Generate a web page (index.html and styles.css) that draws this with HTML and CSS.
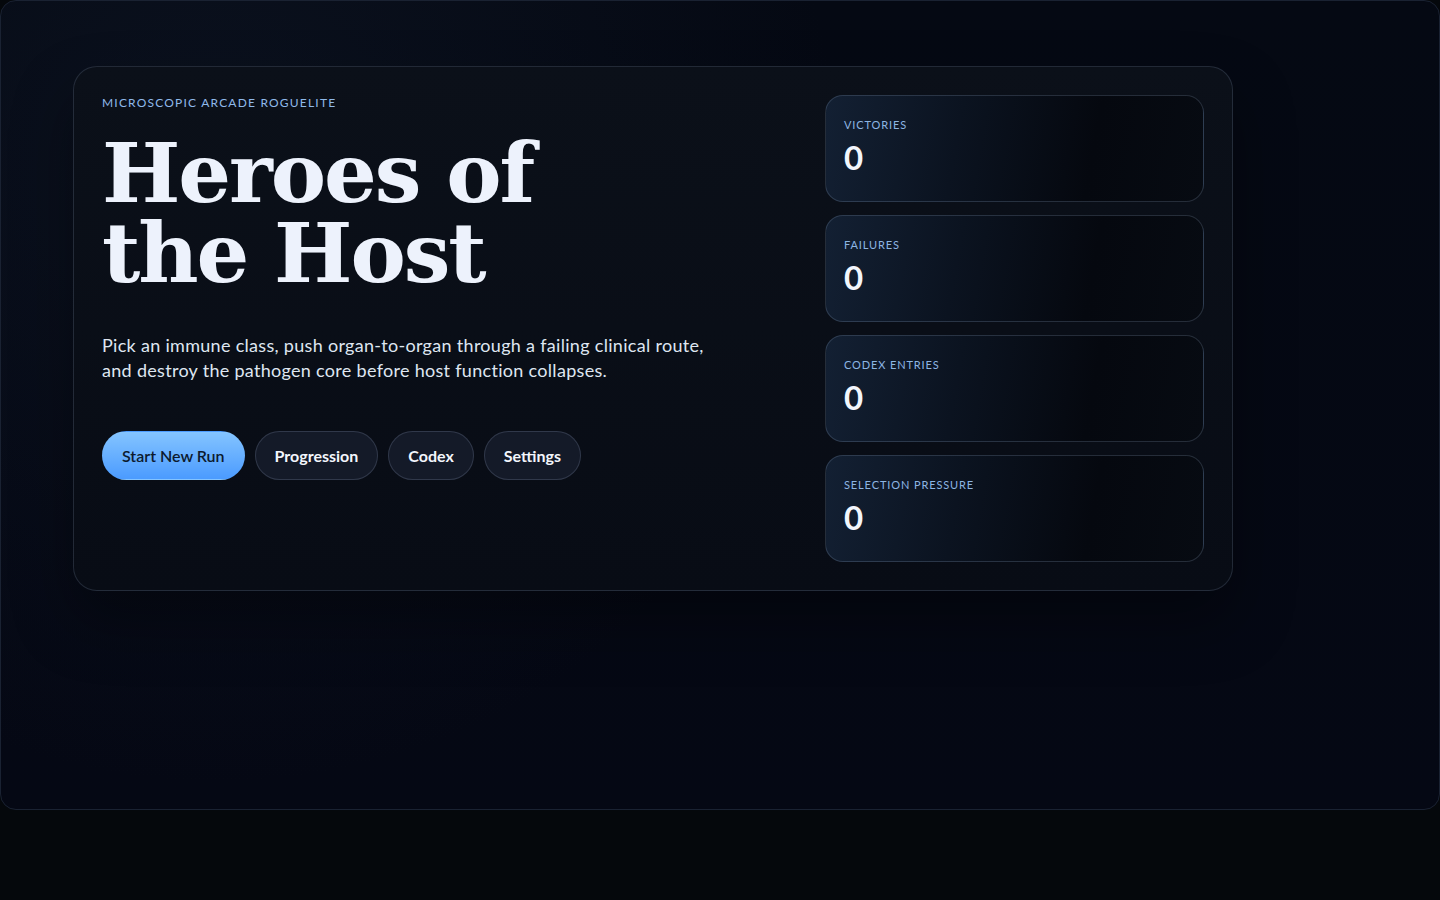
FILE: index.html
```html
<!DOCTYPE html>
<html lang="en">
<head>
    <meta charset="UTF-8">
    <meta name="viewport" content="width=device-width, initial-scale=1.0">
    <title>Heroes of the Host</title>
    <link rel="stylesheet" href="styles.css">
</head>
<body>
    <div class="shell">
        <section class="hero">
            <div class="hero-copy">
                <p class="eyebrow">Microscopic Arcade Roguelite</p>
                <h1>Heroes of the Host</h1>
                <p class="lede">Pick an immune class, push organ-to-organ through a failing clinical route, and destroy the pathogen core before host function collapses.</p>
                <div class="actions">
                    <button class="btn primary">Start New Run</button>
                    <button class="btn">Progression</button>
                    <button class="btn">Codex</button>
                    <button class="btn">Settings</button>
                </div>
            </div>

            <!-- run stats -->
            <div class="stats">
                <div class="stat">
                    <span class="stat-label">Victories</span>
                    <span class="stat-value">0</span>
                </div>
                <div class="stat">
                    <span class="stat-label">Failures</span>
                    <span class="stat-value">0</span>
                </div>
                <div class="stat">
                    <span class="stat-label">Codex Entries</span>
                    <span class="stat-value">0</span>
                </div>
                <div class="stat">
                    <span class="stat-label">Selection Pressure</span>
                    <span class="stat-value">0</span>
                </div>
            </div>
        </section>
    </div>
</body>
</html>
```

FILE: styles.css
```css
* {
    box-sizing: border-box;
}
body {
    margin: 0;
    min-height: 100vh;
    background: #05080c;
    color: #eef3fb;
    font-family: "Trebuchet MS", Lato, "Noto Sans", sans-serif;
}
.shell {
    min-height: 90vh;
    padding: 65px 72px;
    border: 1px solid #1a2232;
    border-radius: 16px;
    background:
        radial-gradient(circle at 15% 20%, rgba(24, 36, 56, 0.3), transparent 45%),
        linear-gradient(180deg, #050913 0%, #050814 100%);
}
.hero {
    display: grid;
    grid-template-columns: 1fr 379px;
    gap: 40px;
    max-width: 1160px;
    padding: 28px;
    border: 1px solid rgba(140, 160, 190, 0.2);
    border-radius: 24px;
    background: linear-gradient(180deg, #0b1019 0%, #080c15 100%);
    box-shadow: 0 30px 60px rgba(0, 0, 0, 0.35);
}
.eyebrow {
    margin: 0;
    font-size: 12px;
    line-height: 15px;
    letter-spacing: 0.1em;
    text-transform: uppercase;
    color: #8fb9ea;
}
h1 {
    margin: 23px 0 0;
    max-width: 480px;
    font-family: "DejaVu Serif", Georgia, serif;
    font-size: 83px;
    line-height: 80px;
    font-weight: bold;
    letter-spacing: -0.025em;
    color: #edf2fc;
}
.lede {
    margin: 40px 0 0;
    max-width: 610px;
    font-size: 18px;
    line-height: 25px;
    letter-spacing: 0.3px;
    color: #dfe6f1;
}
.actions {
    display: flex;
    gap: 10px;
    margin-top: 48px;
}
.btn {
    padding: 13px 19px;
    border: 1px solid rgba(150, 165, 195, 0.22);
    border-radius: 999px;
    background: #141a28;
    color: #f3f6fc;
    font-family: inherit;
    font-size: 16px;
    line-height: 21px;
    font-weight: bold;
    cursor: pointer;
}
.btn.primary {
    border-color: transparent;
    background: linear-gradient(180deg, #84c4ff 0%, #4b9bff 100%);
    color: #0c1a2e;
    font-weight: 600;
}
.stats {
    display: flex;
    flex-direction: column;
    gap: 13px;
}
.stat {
    display: flex;
    flex-direction: column;
    height: 107px;
    padding: 22px 18px;
    border: 1px solid rgba(130, 150, 180, 0.25);
    border-radius: 18px;
    background: linear-gradient(100deg, #132033 0%, #0b1320 35%, #05080f 70%, #070b12 100%);
}
.stat-label {
    font-size: 11px;
    line-height: 14px;
    letter-spacing: 0.08em;
    text-transform: uppercase;
    color: #8db5e3;
}
.stat-value {
    margin-top: 5px;
    font-size: 33px;
    line-height: 40px;
    font-weight: bold;
    color: #f2f6fc;
}
```
